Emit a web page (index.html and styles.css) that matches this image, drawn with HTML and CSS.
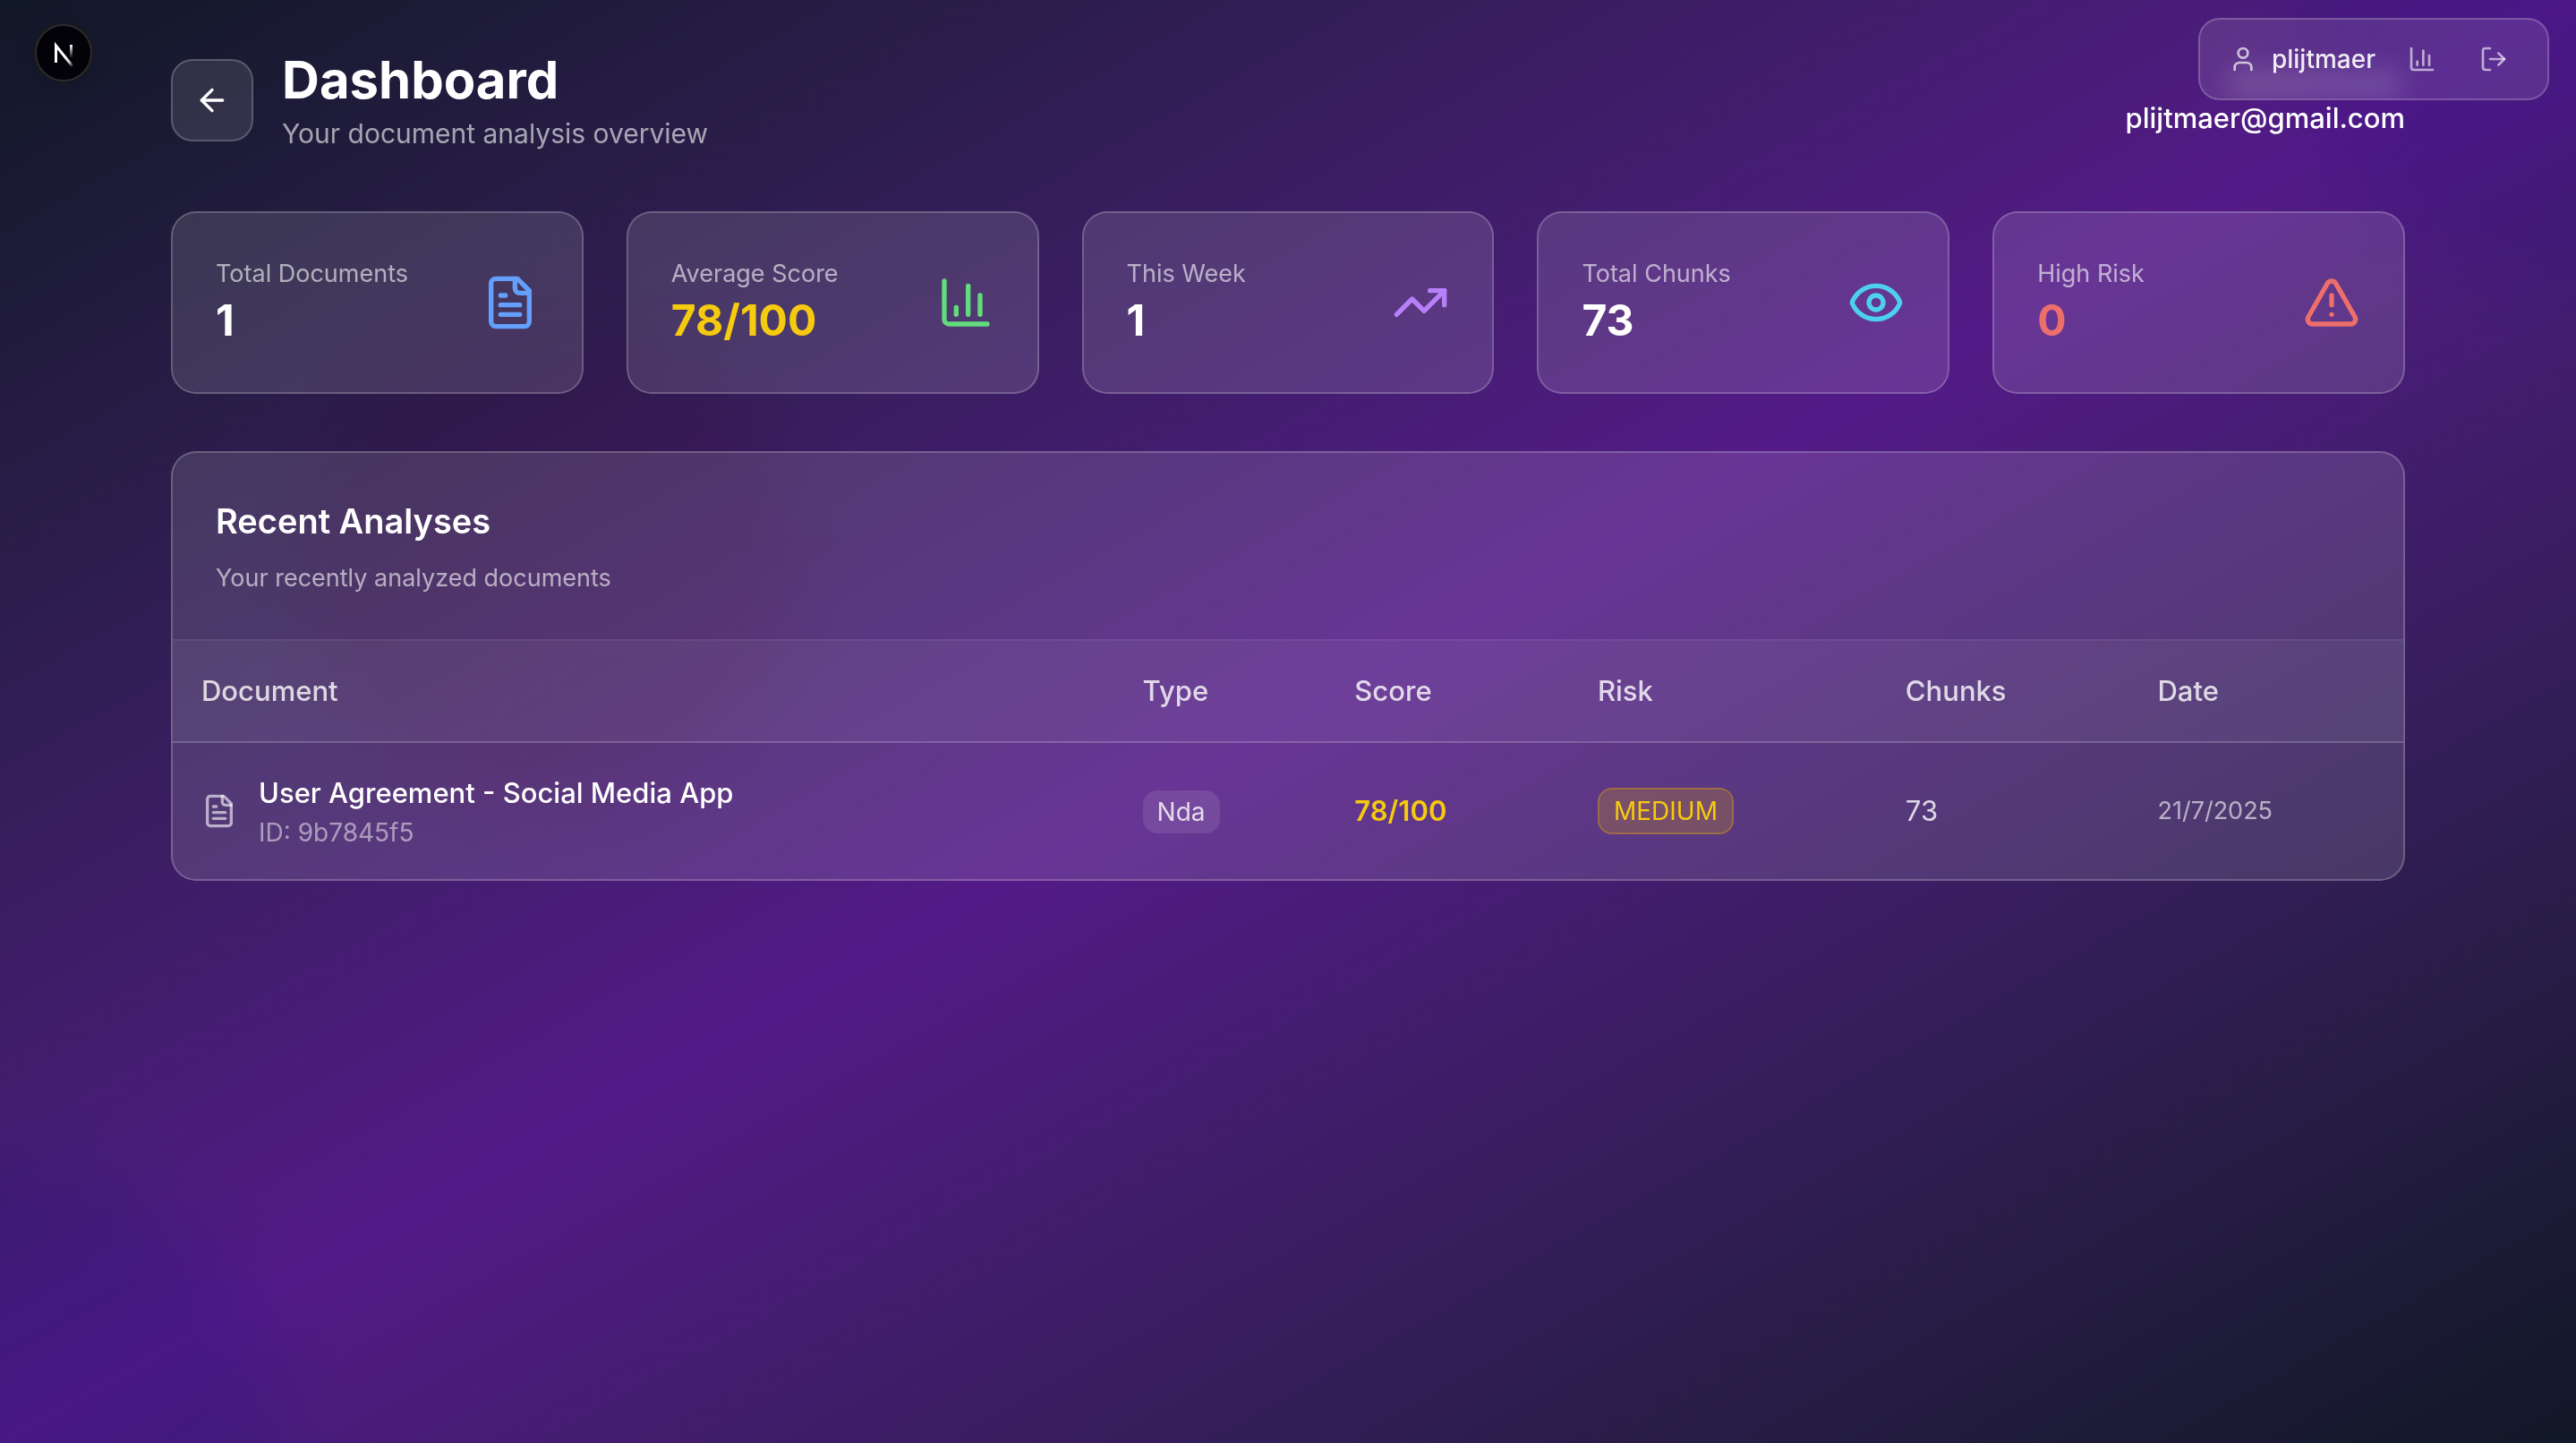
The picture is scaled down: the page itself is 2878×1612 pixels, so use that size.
FILE: index.html
```html
<!DOCTYPE html>
<html lang="en">
<head>
<meta charset="utf-8">
<meta name="viewport" content="width=device-width, initial-scale=1">
<title>Dashboard</title>
<link rel="stylesheet" href="styles.css">
</head>
<body>
<div class="page">
  <div class="glow glow-purple"></div>
  <div class="glow glow-blue"></div>
  <div class="glow glow-pink"></div>

  <button class="dev-badge" type="button" aria-label="Open Next.js dev tools">
    <svg width="40" height="40" viewBox="0 0 40 40" fill="none" aria-hidden="true">
      <defs>
        <linearGradient id="leg" x1="23" y1="25" x2="31" y2="35" gradientUnits="userSpaceOnUse"><stop stop-color="#fff"/><stop offset="0.5" stop-color="#fff" stop-opacity="0.8"/><stop offset="1" stop-color="#fff" stop-opacity="0"/></linearGradient>
        <linearGradient id="bar" x1="28" y1="11" x2="28" y2="26" gradientUnits="userSpaceOnUse"><stop stop-color="#fff"/><stop offset="1" stop-color="#fff" stop-opacity="0"/></linearGradient>
      </defs>
      <path d="M11.500 31V12L30 35" stroke="url(#leg)" stroke-width="3"/>
      <path d="M28.500 11V26" stroke="url(#bar)" stroke-width="3"/>
    </svg>
  </button>

  <nav class="user-bar" aria-label="Account">
    <div class="user">
      <svg class="icon icon-sm" viewBox="0 0 24 24" aria-hidden="true"><path d="M19 21v-2a4 4 0 0 0-4-4H9a4 4 0 0 0-4 4v2"/><circle cx="12" cy="7" r="4"/></svg>
      <span class="user-name">plijtmaer</span>
    </div>
    <button class="bar-button" type="button" aria-label="Dashboard">
      <svg class="icon icon-sm" viewBox="0 0 24 24" aria-hidden="true"><path d="M3 3v16a2 2 0 0 0 2 2h16"/><path d="M18 17V9"/><path d="M13 17V5"/><path d="M8 17v-3"/></svg>
    </button>
    <button class="bar-button" type="button" aria-label="Sign out">
      <svg class="icon icon-sm" viewBox="0 0 24 24" aria-hidden="true"><path d="M9 21H5a2 2 0 0 1-2-2V5a2 2 0 0 1 2-2h4"/><path d="m16 17 5-5-5-5"/><path d="M21 12H9"/></svg>
    </button>
  </nav>

  <main class="content">
    <header class="header">
      <div class="header-left">
        <button class="back" type="button" aria-label="Back">
          <svg class="icon icon-md" viewBox="0 0 24 24" aria-hidden="true"><path d="m12 19-7-7 7-7"/><path d="M19 12H5"/></svg>
        </button>
        <div>
          <h1 class="title">Dashboard</h1>
          <p class="subtitle">Your document analysis overview</p>
        </div>
      </div>
      <p class="email">plijtmaer@gmail.com</p>
    </header>

    <section class="stats" aria-label="Statistics">
      <article class="card stat">
        <div><p class="label">Total Documents</p><p class="value">1</p></div>
        <svg class="icon icon-lg blue" viewBox="0 0 24 24" aria-hidden="true"><path d="M15 2H6a2 2 0 0 0-2 2v16a2 2 0 0 0 2 2h12a2 2 0 0 0 2-2V7Z"/><path d="M14 2v4a2 2 0 0 0 2 2h4"/><path d="M10 9H8"/><path d="M16 13H8"/><path d="M16 17H8"/></svg>
      </article>
      <article class="card stat">
        <div><p class="label">Average Score</p><p class="value yellow">78/100</p></div>
        <svg class="icon icon-lg green" viewBox="0 0 24 24" aria-hidden="true"><path d="M3 3v16a2 2 0 0 0 2 2h16"/><path d="M18 17V9"/><path d="M13 17V5"/><path d="M8 17v-3"/></svg>
      </article>
      <article class="card stat">
        <div><p class="label">This Week</p><p class="value">1</p></div>
        <svg class="icon icon-lg purple" viewBox="0 0 24 24" aria-hidden="true"><path d="M16 7h6v6"/><path d="m22 7-8.500 8.500-5-5L2 17"/></svg>
      </article>
      <article class="card stat">
        <div><p class="label">Total Chunks</p><p class="value">73</p></div>
        <svg class="icon icon-lg cyan" viewBox="0 0 24 24" aria-hidden="true"><path d="M2.062 12.348a1 1 0 0 1 0-.696 10.750 10.750 0 0 1 19.876 0 1 1 0 0 1 0 .696 10.750 10.750 0 0 1-19.876 0"/><circle cx="12" cy="12" r="3"/></svg>
      </article>
      <article class="card stat">
        <div><p class="label">High Risk</p><p class="value red">0</p></div>
        <svg class="icon icon-lg red" viewBox="0 0 24 24" aria-hidden="true"><path d="m21.730 18-8-14a2 2 0 0 0-3.480 0l-8 14A2 2 0 0 0 4 21h16a2 2 0 0 0 1.730-3"/><path d="M12 9v4"/><path d="M12 17h.01"/></svg>
      </article>
    </section>

    <section class="card panel">
      <div class="panel-head">
        <h2 class="panel-title">Recent Analyses</h2>
        <p class="label">Your recently analyzed documents</p>
      </div>
      <table class="table">
        <colgroup>
          <col class="col-document"><col class="col-type"><col class="col-score"><col class="col-risk"><col class="col-chunks"><col class="col-date">
        </colgroup>
        <thead>
          <tr><th scope="col">Document</th><th scope="col">Type</th><th scope="col">Score</th><th scope="col">Risk</th><th scope="col">Chunks</th><th scope="col">Date</th></tr>
        </thead>
        <tbody>
          <tr>
            <td>
              <div class="document">
                <svg class="icon icon-md" viewBox="0 0 24 24" aria-hidden="true"><path d="M15 2H6a2 2 0 0 0-2 2v16a2 2 0 0 0 2 2h12a2 2 0 0 0 2-2V7Z"/><path d="M14 2v4a2 2 0 0 0 2 2h4"/><path d="M10 9H8"/><path d="M16 13H8"/><path d="M16 17H8"/></svg>
                <div><p class="doc-name">User Agreement - Social Media App</p><p class="doc-id">ID: 9b7845f5</p></div>
              </div>
            </td>
            <td><span class="tag">Nda</span></td>
            <td><span class="score yellow">78/100</span></td>
            <td><span class="tag tag-risk">MEDIUM</span></td>
            <td class="chunks">73</td>
            <td class="label">21/7/2025</td>
          </tr>
        </tbody>
      </table>
    </section>
  </main>
</div>
</body>
</html>
```
FILE: styles.css
```css
* {
  box-sizing: border-box;
  margin: 0;
  padding: 0;
}

body {
  font-family: Inter, "Liberation Sans", sans-serif;
  font-size: 31px;
  line-height: 48px;
  color: #fff;
  background: #111827;
}

button {
  font: inherit;
  color: inherit;
  background: none;
  border: 0;
  cursor: pointer;
}

.page {
  position: relative;
  min-height: 100vh;
  overflow: hidden;
  background: linear-gradient(to bottom right in oklab, #111827, #531a87, #111827);
}

/* Soft colour blobs behind the content */
.glow {
  position: absolute;
  width: 640px;
  height: 640px;
  border-radius: 50%;
  mix-blend-mode: multiply;
  filter: blur(48px);
  opacity: 0.2;
}

.glow-purple {
  top: -320px;
  right: -320px;
  background: #8058ff;
}

.glow-blue {
  bottom: -320px;
  left: -320px;
  background: #4a86f0;
}

.glow-pink {
  top: 340px;
  left: 320px;
  width: 576px;
  height: 576px;
  background: #f6339a;
}

.icon {
  flex: none;
  display: block;
  fill: none;
  stroke: currentColor;
  stroke-width: 2;
  stroke-linecap: round;
  stroke-linejoin: round;
}

.icon-sm { width: 32px; height: 32px; }
.icon-md { width: 40px; height: 40px; }
.icon-lg { width: 64px; height: 64px; }

.blue { color: #639ffb; }
.green { color: #62dc7c; }
.purple { color: #b780fb; }
.cyan { color: #4dd0ef; }
.yellow { color: #f6ca0e; }
.red { color: #ed6f6b; }

.dev-badge {
  position: absolute;
  z-index: 2;
  top: 27px;
  left: 39px;
  display: grid;
  place-items: center;
  width: 64px;
  height: 64px;
  border: 2px solid #2b2b2f;
  border-radius: 50%;
  background: #020208;
  box-shadow: 0 0 0 2px #18181c, 0 8px 24px rgba(0, 0, 0, 0.15);
}

.user-bar {
  position: absolute;
  z-index: 2;
  top: 20px;
  right: 30px;
  display: flex;
  align-items: center;
  gap: 16px;
  padding: 12px 28px 12px 32px;
  overflow: hidden;
  border: 2px solid rgba(255, 255, 255, 0.2);
  border-radius: 24px;
  background: rgba(255, 255, 255, 0.1);
  color: rgba(255, 255, 255, 0.6);
}

/* Frosted highlight along the bar's lower edge */
.user-bar::before {
  content: "";
  position: absolute;
  left: 32px;
  bottom: 0;
  width: 192px;
  height: 32px;
  background: rgba(255, 255, 255, 0.14);
  filter: blur(14px);
}

.user {
  position: relative;
  display: flex;
  align-items: center;
  gap: 16px;
  padding-right: 4px;
}

.user .icon { color: rgba(255, 255, 255, 0.7); }

.user-name {
  font-size: 28px;
  line-height: 40px;
  font-weight: 500;
  color: rgba(255, 255, 255, 0.9);
}

.bar-button { padding: 16px; }

.content {
  position: relative;
  max-width: 2560px;
  margin: 0 auto;
  padding: 52px 32px;
}

.header,
.header-left {
  display: flex;
  align-items: center;
}

.header {
  justify-content: space-between;
  margin-bottom: 64px;
}

.header-left { gap: 32px; }

.back {
  padding: 24px;
  border: 2px solid rgba(255, 255, 255, 0.2);
  border-radius: 24px;
  background: rgba(255, 255, 255, 0.1);
}

.title {
  font-size: 58px;
  line-height: 74px;
  font-weight: 700;
}

.subtitle {
  font-size: 30px;
  line-height: 46px;
  color: rgba(255, 255, 255, 0.6);
}

.label {
  font-size: 27px;
  line-height: 40px;
  color: rgba(255, 255, 255, 0.6);
}

.email {
  padding-top: 40px;
  font-weight: 500;
}

.card {
  border: 2px solid rgba(255, 255, 255, 0.2);
  border-radius: 28px;
  background: rgba(255, 255, 255, 0.12);
}

.stats {
  display: grid;
  grid-template-columns: repeat(5, 1fr);
  gap: 48px;
  margin-bottom: 64px;
}

.stat {
  display: flex;
  align-items: center;
  justify-content: space-between;
  padding: 48px;
}

.value {
  font-size: 48px;
  line-height: 64px;
  font-weight: 700;
}

.panel { overflow: hidden; }

.panel-head {
  display: grid;
  gap: 16px;
  padding: 48px;
  border-bottom: 2px solid rgba(255, 255, 255, 0.1);
}

.panel-title {
  font-size: 38px;
  line-height: 56px;
  font-weight: 600;
}

.table {
  width: 100%;
  table-layout: fixed;
  border-collapse: collapse;
}

.col-document { width: 42.2%; }
.col-type { width: 9.5%; }
.col-score { width: 10.9%; }
.col-risk { width: 13.8%; }
.col-chunks { width: 11.3%; }
.col-date { width: 12.3%; }

.table th,
.table td {
  padding: 32px;
  text-align: left;
}

.table thead tr {
  background: rgba(255, 255, 255, 0.05);
  border-bottom: 2px solid rgba(255, 255, 255, 0.1);
}

.table th {
  font-weight: 500;
  color: rgba(255, 255, 255, 0.8);
}

.document {
  display: flex;
  align-items: center;
  gap: 24px;
  color: rgba(255, 255, 255, 0.6);
}

.doc-name {
  font-weight: 500;
  color: #fff;
}

.doc-id {
  font-size: 28px;
  line-height: 40px;
  color: rgba(255, 255, 255, 0.5);
}

.tag {
  display: inline-block;
  padding: 4px 16px;
  border-radius: 16px;
  background: rgba(255, 255, 255, 0.1);
  font-size: 28px;
  line-height: 40px;
  color: rgba(255, 255, 255, 0.8);
}

.tag-risk {
  border: 2px solid rgba(240, 177, 0, 0.3);
  background: rgba(240, 177, 0, 0.2);
  color: #f6ca0e;
}

.score { font-weight: 600; }

.chunks { color: rgba(255, 255, 255, 0.8); }
```
